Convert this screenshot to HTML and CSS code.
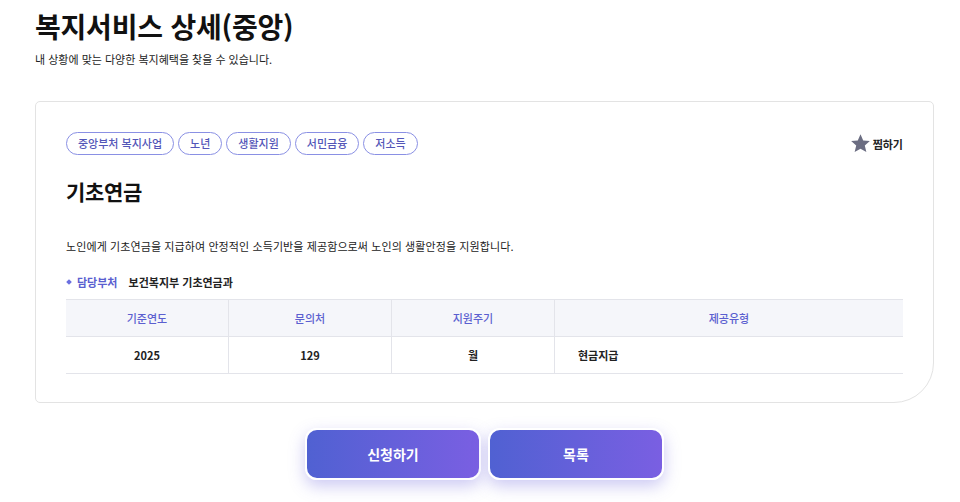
FILE: index.html
```html
<!DOCTYPE html>
<html lang="ko">
<head>
    <meta charset="UTF-8">
    <meta name="viewport" content="width=device-width, initial-scale=1.0">
    <title>복지서비스 상세(중앙)</title>
    <link rel="stylesheet" href="styles.css">
</head>
<body>
    <div class="wrap">
        <header class="page-head">
            <h1>복지서비스 상세(중앙)</h1>
            <p>내 상황에 맞는 다양한 복지혜택을 찾을 수 있습니다.</p>
        </header>

        <section class="detail-card">
            <div class="card-top">
                <ul class="tags">
                    <li>중앙부처 복지사업</li>
                    <li>노년</li>
                    <li>생활지원</li>
                    <li>서민금융</li>
                    <li>저소득</li>
                </ul>
                <button class="fav-btn" type="button">
                    <svg width="21" height="21" viewBox="0 0 24 24"><path d="M12 1.5l3.1 7 7.6.7-5.8 5.1 1.8 7.5L12 17.9l-6.7 3.9 1.8-7.5-5.8-5.1 7.6-.7z" fill="#6b6d82"/></svg>
                    찜하기
                </button>
            </div>

            <h2 class="service-title">기초연금</h2>
            <p class="service-desc">노인에게 기초연금을 지급하여 안정적인 소득기반을 제공함으로써 노인의 생활안정을 지원합니다.</p>

            <div class="dept">
                <span class="dept-label">담당부처</span>
                <span class="dept-name">보건복지부 기초연금과</span>
            </div>

            <table class="info-table">
                <thead>
                    <tr>
                        <th class="col-year">기준연도</th>
                        <th class="col-tel">문의처</th>
                        <th class="col-cycle">지원주기</th>
                        <th>제공유형</th>
                    </tr>
                </thead>
                <tbody>
                    <tr>
                        <td>2025</td>
                        <td>129</td>
                        <td>월</td>
                        <td class="left">현금지급</td>
                    </tr>
                </tbody>
            </table>
        </section>

        <div class="actions">
            <button class="btn" type="button">신청하기</button>
            <button class="btn" type="button">목록</button>
        </div>
    </div>
</body>
</html>
```

FILE: styles.css
```css
body {
    margin: 0;
    padding: 0 0 40px;
    font-family: "Noto Sans CJK KR", "Noto Sans", sans-serif;
    color: #111;
    background: #fff;
}
.wrap {
    width: 899px;
    margin-left: 35px;
}
.page-head h1 {
    margin: 0;
    padding-top: 5px;
    font-size: 28px;
    font-weight: 700;
    letter-spacing: -0.2px;
    line-height: 42px;
}
.page-head p {
    margin: 4px 0 0;
    font-size: 11px;
    color: #222;
}
.detail-card {
    margin-top: 34px;
    padding: 30px 30px 28px 30px;
    border: 1px solid #e3e3e3;
    border-radius: 5px 5px 40px 5px;
}
.card-top {
    display: flex;
    justify-content: space-between;
    align-items: center;
}
.tags {
    display: flex;
    gap: 4px;
    list-style: none;
    margin: 0;
    padding: 0;
}
.tags li {
    height: 21px;
    line-height: 21px;
    padding: 0 11px;
    border: 1px solid #8a90e4;
    border-radius: 12px;
    font-size: 11px;
    font-weight: 500;
    color: #5356b8;
}
.fav-btn {
    display: flex;
    align-items: center;
    gap: 2px;
    padding: 0;
    background: none;
    border: none;
    font-family: inherit;
    font-size: 11px;
    font-weight: 700;
    color: #222;
    cursor: pointer;
}
.service-title {
    margin: 20px 0 0;
    font-size: 21px;
    font-weight: 700;
    line-height: 32px;
    letter-spacing: -0.3px;
}
.service-desc {
    margin: 31px 0 0;
    font-size: 11px;
    letter-spacing: 0.1px;
    color: #222;
}
.dept {
    margin-top: 20px;
    font-size: 11px;
    font-weight: 700;
}
.dept-label {
    position: relative;
    padding-left: 11px;
    margin-right: 8px;
    color: #5b5fd0;
}
.dept-label::before {
    content: "";
    position: absolute;
    left: 1px;
    top: 50%;
    width: 4px;
    height: 4px;
    margin-top: -2px;
    background: #6a6fe0;
    transform: rotate(45deg);
}
.dept-name {
    color: #222;
}
.info-table {
    width: 100%;
    margin-top: 9px;
    border-collapse: collapse;
    font-size: 11px;
}
.info-table th,
.info-table td {
    height: 36px;
    padding: 0;
    text-align: center;
    border-top: 1px solid #e3e4ea;
    border-bottom: 1px solid #e3e4ea;
    border-left: 1px solid #e3e4ea;
}
.info-table th:first-child,
.info-table td:first-child {
    border-left: none;
}
.info-table th {
    background: #f5f6fa;
    font-weight: 500;
    color: #5b5fd0;
}
.info-table td {
    font-weight: 700;
    color: #222;
}
.info-table td.left {
    text-align: left;
    padding-left: 23px;
}
.col-year,
.col-tel,
.col-cycle {
    width: 162px;
}
.actions {
    display: flex;
    justify-content: center;
    gap: 7px;
    margin-top: 25px;
}
.btn {
    width: 176px;
    height: 52px;
    border: 2px solid #fff;
    border-radius: 12px;
    background: linear-gradient(to right, #5061d2, #7a5fe2);
    box-shadow: 0 6px 16px rgba(110, 100, 220, 0.35);
    color: #fff;
    font-family: inherit;
    font-size: 14px;
    font-weight: 700;
    cursor: pointer;
}
```
